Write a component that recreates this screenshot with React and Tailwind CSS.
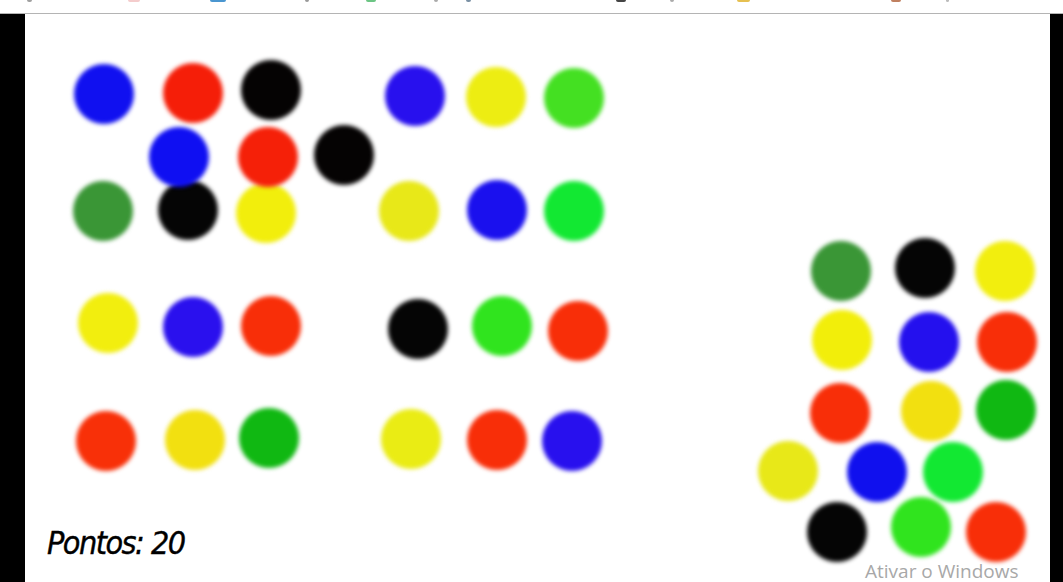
import React from 'react';

// game state: ball centers in page coords, canvas starts at (25, 14)
const BALLS = [
  // row 2 first so the shifted row draws over it
  { x: 103, y: 211, c: '#3a9636' },
  { x: 188, y: 210, c: '#050505' },
  { x: 266, y: 213, c: '#f2ee0c' },
  { x: 409, y: 211, c: '#e8e818' },
  { x: 497, y: 210, c: '#1a10ee' },
  { x: 574, y: 211, c: '#12e832' },

  { x: 104, y: 94, c: '#1010f0' },
  { x: 193, y: 93, c: '#f51e08' },
  { x: 271, y: 90, c: '#050303' },
  { x: 415, y: 96, c: '#2810ee' },
  { x: 496, y: 97, c: '#eded12' },
  { x: 574, y: 98, c: '#44e022' },

  { x: 179, y: 157, c: '#0f0ff2' },
  { x: 268, y: 157, c: '#f52008' },
  { x: 344, y: 155, c: '#050303' },

  { x: 108, y: 323, c: '#f2ee0e' },
  { x: 193, y: 327, c: '#2a10ee' },
  { x: 271, y: 326, c: '#f82e08' },
  { x: 418, y: 329, c: '#050505' },
  { x: 502, y: 326, c: '#30e41e' },
  { x: 578, y: 331, c: '#f82e08' },

  { x: 106, y: 441, c: '#f83008' },
  { x: 195, y: 440, c: '#f2e010' },
  { x: 269, y: 438, c: '#10b812' },
  { x: 411, y: 439, c: '#eaec14' },
  { x: 497, y: 440, c: '#f82e08' },
  { x: 572, y: 441, c: '#2810ee' },

  { x: 841, y: 271, c: '#3a9636' },
  { x: 925, y: 268, c: '#050505' },
  { x: 1005, y: 271, c: '#f2ee0e' },
  { x: 842, y: 340, c: '#f2ee0a' },
  { x: 929, y: 342, c: '#2410ee' },
  { x: 1007, y: 342, c: '#f82e08' },
  { x: 840, y: 413, c: '#f82e08' },
  { x: 931, y: 411, c: '#f2e010' },
  { x: 1006, y: 410, c: '#10b812' },
  { x: 788, y: 471, c: '#e8e818' },
  { x: 877, y: 472, c: '#1010ee' },
  { x: 953, y: 472, c: '#12e832' },
  { x: 837, y: 532, c: '#050505' },
  { x: 921, y: 527, c: '#30e41e' },
  { x: 996, y: 532, c: '#f82e08' },
];

const BOOKMARK_BITS = [
  { x: 27, w: 5, c: '#a0a0a0' },
  { x: 128, w: 12, c: '#f4cccc' },
  { x: 210, w: 16, c: '#4a96d0' },
  { x: 305, w: 4, c: '#999' },
  { x: 366, w: 10, c: '#6cc584' },
  { x: 434, w: 4, c: '#aaa' },
  { x: 466, w: 5, c: '#7a90a4' },
  { x: 616, w: 10, c: '#444' },
  { x: 670, w: 4, c: '#aaa' },
  { x: 737, w: 13, c: '#e6c050' },
  { x: 891, w: 10, c: '#c08060' },
  { x: 946, w: 3, c: '#bbb' },
];

function Ball({ x, y, c }) {
  return (
    <div
      className="absolute w-[60px] h-[60px] rounded-full blur-[2px]"
      style={{ left: x - 30 - 25, top: y - 30 - 14, backgroundColor: c }}
    />
  );
}

export default function App() {
  return (
    <div className="relative w-full h-[582px] flex flex-col overflow-hidden bg-white">
      <div className="relative h-[14px] shrink-0 bg-white border-b border-[#b4b4b4]">
        {BOOKMARK_BITS.map((b, i) => (
          <span
            key={i}
            className="absolute top-0 h-[2px] rounded-b-sm"
            style={{ left: b.x, width: b.w, backgroundColor: b.c }}
          />
        ))}
      </div>
      <div className="flex flex-1">
        <div className="w-[25px] bg-black" />
        <div className="relative flex-1 bg-white overflow-hidden">
          {BALLS.map((b, i) => (
            <Ball key={i} {...b} />
          ))}
          <div className="absolute left-[22px] bottom-[23px] text-[32px] leading-none italic font-normal text-black tracking-[-1.5px] [-webkit-text-stroke:0.4px_black] font-['DejaVu_Sans_Condensed','DejaVu_Sans',sans-serif]">
            Pontos: 20
          </div>
        </div>
        <div className="w-[13px] bg-black" />
      </div>
      <div className="absolute left-[865px] bottom-[1px] text-[19px] leading-[20px] text-[#a8a8a8] font-['Open_Sans','Noto_Sans',sans-serif]">
        Ativar o Windows
      </div>
    </div>
  );
}
